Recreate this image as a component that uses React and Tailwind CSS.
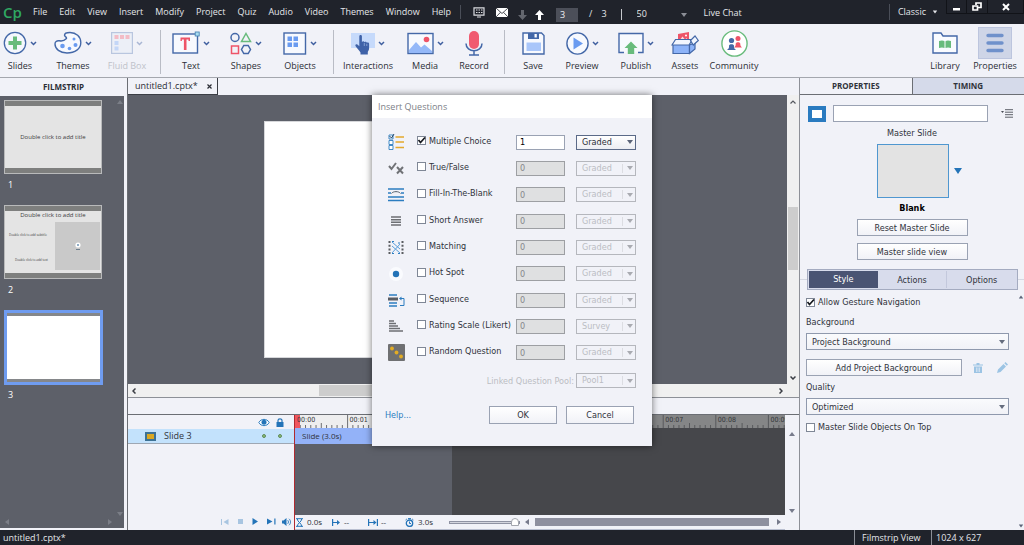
import React from "react";

const MENUS = ["File", "Edit", "View", "Insert", "Modify", "Project", "Quiz", "Audio", "Video", "Themes", "Window", "Help"];

const QUESTIONS = [
  { id: "multiple", label: "Multiple Choice", kind: "Graded", count: "1", on: true },
  { id: "truefalse", label: "True/False", kind: "Graded", count: "0" },
  { id: "blank", label: "Fill-In-The-Blank", kind: "Graded", count: "0" },
  { id: "short", label: "Short Answer", kind: "Graded", count: "0" },
  { id: "matching", label: "Matching", kind: "Graded", count: "0" },
  { id: "hotspot", label: "Hot Spot", kind: "Graded", count: "0" },
  { id: "sequence", label: "Sequence", kind: "Graded", count: "0" },
  { id: "likert", label: "Rating Scale (Likert)", kind: "Survey", count: "0" },
  { id: "random", label: "Random Question", kind: "Graded", count: "0" },
];

/* ---------- small glyphs ---------- */

function Chevron() {
  return (
    <svg width="7" height="5" viewBox="0 0 7 5" fill="none" stroke="#3f5f9f" strokeWidth="1.5" className="shrink-0">
      <path d="M1 1l2.500 2.500L6 1" />
    </svg>
  );
}

function Tri({ dir = "down", className = "" }) {
  const d = { down: "M0 1h6L3 5z", up: "M0 5h6L3 1z", left: "M5 0v6L1 3z", right: "M1 0v6l4-3z" }[dir];
  return (
    <svg width="6" height="6" viewBox="0 0 6 6" className={"shrink-0 " + className}>
      <path d={d} fill="currentColor" />
    </svg>
  );
}

/* ---------- toolbar icons ---------- */

const blue = "#4468a8";

const ICONS = {
  Slides: (
    <svg width="24" height="24" viewBox="0 0 24 24">
      <circle cx="12" cy="12" r="10.7" fill="#f5f7fd" stroke={blue} strokeWidth="1.3" />
      <path d="M10 5.500h4V10h4.500v4H14v4.500h-4V14H5.500v-4H10z" fill="#68bb7c" />
    </svg>
  ),
  Themes: (
    <svg width="28" height="24" viewBox="0 0 28 24">
      <path d="M12.500 7.500C11 9 9 10.500 5.500 9.800 2.500 9.300 1 11 1 13c0 5 5 9 12 9 8 0 13.800-4 13.800-10.500C26.800 5.500 22 1.500 16 1.500c-3 0-5.500 1-5.500 2.700 0 1.300 2.500 1.800 2 3.300z" fill="#f7f9fe" stroke={blue} strokeWidth="1.4" />
      <circle cx="8.500" cy="15" r="2.300" fill="#6a9bf0" />
      <circle cx="15.500" cy="17.500" r="1.800" fill="#6a9bf0" />
      <circle cx="21.500" cy="14" r="2" fill="#6a9bf0" />
      <circle cx="20" cy="8" r="1.500" fill="#6a9bf0" />
    </svg>
  ),
  "Fluid Box": (
    <svg width="22" height="22" viewBox="0 0 22 22">
      <rect x=".6" y=".6" width="20.800" height="20.800" fill="#eceff7" stroke="#b9c6df" strokeWidth="1.200" />
      <path d="M3.500 3h4v4h-4zM9 3h4v4H9zM14.500 3h4v4h-4z" fill="#f3bcc6" />
      <path d="M3.500 9h4v4h-4zM3.500 14.500h4v4h-4z" fill="#c3d6f7" />
    </svg>
  ),
  Text: (
    <svg width="28" height="24" viewBox="0 0 28 24">
      <rect x="1" y="3" width="24.500" height="19" fill="#f7f9fe" stroke={blue} strokeWidth="1.400" />
      <path d="M8.500 6.500h9.500v3.500h-1.500V8.600h-2V19h-2.600V8.600h-2V10H8.500z" fill="#ee5468" />
      <rect x="23.200" y="1" width="4" height="4" fill="#a9dcf0" stroke="#4b86b5" strokeWidth=".9" />
    </svg>
  ),
  Shapes: (
    <svg width="22" height="23" viewBox="0 0 22 23" fill="none" strokeWidth="1.500">
      <circle cx="5" cy="5.500" r="4" stroke={blue} />
      <path d="M16 1.500l4.500 8h-9z" stroke="#68bb7c" />
      <path d="M1.500 14h7v7.500h-7z" stroke="#ee5468" />
      <path d="M13.800 13.500h4.400l2.300 4-2.300 4h-4.400l-2.300-4z" stroke={blue} />
    </svg>
  ),
  Objects: (
    <svg width="24" height="23" viewBox="0 0 24 23">
      <rect x="1" y="1" width="21.500" height="21" fill="#f7f9fe" stroke={blue} strokeWidth="1.400" />
      <path d="M4.500 4.500H9V9H4.500zM10.500 4.500H15V9h-4.500zM4.500 10.500H9V15H4.500zM10.500 10.500H15V15h-4.500z" fill="#6a9bf0" />
    </svg>
  ),
  Interactions: (
    <svg width="24" height="24" viewBox="0 0 24 24">
      <rect x="0" y="2" width="24" height="15" fill="#c6dafb" />
      <path d="M8.300 5.300c0-1.800 2.600-1.800 2.600 0V11c.8-1.200 2.300-.9 2.500.2.900-.8 2.200-.4 2.400.6.900-.6 2.300-.2 2.300 1.200v4.500c0 1.700-1 2.500-1.300 3.500v2.500H9.500V21.500C8.500 19.500 5.500 17 4.500 15c-.6-1.600 1.200-2.300 2.300-1.200l1.500 1.400z" fill="#3f62a8" />
      <path d="M13.300 12v3M15.800 12.800V15" stroke="#c6dafb" strokeWidth=".5" />
    </svg>
  ),
  Media: (
    <svg width="27" height="23" viewBox="0 0 27 23">
      <rect x="1" y="1.500" width="25" height="20" fill="#f7f9fe" stroke={blue} strokeWidth="1.400" />
      <path d="M2 18l7-8 5 5.500 3.500-3 7.500 6.500v2H2z" fill="#94b8f8" />
      <circle cx="19.500" cy="7.500" r="2.800" fill="#ee5468" />
    </svg>
  ),
  Record: (
    <svg width="18" height="25" viewBox="0 0 18 25" fill="none">
      <rect x="4" y="0" width="10" height="18" rx="5" fill="#f05a70" />
      <path d="M1 12.500c0 9.500 16 9.500 16 0M9 19.800V24M4 24h10" stroke={blue} strokeWidth="1.500" />
    </svg>
  ),
  Save: (
    <svg width="23" height="23" viewBox="0 0 23 23">
      <path d="M1 1h18.500L22 3.500V22H1z" fill="#f7f9fe" stroke={blue} strokeWidth="1.400" />
      <path d="M6 1h11v6H6z" fill={blue} />
      <path d="M12.500 2h2.300v3.500h-2.300z" fill="#fff" />
      <path d="M4.500 10.500h14.500V19H4.500z" fill="#a9c6fa" />
    </svg>
  ),
  Preview: (
    <svg width="23" height="23" viewBox="0 0 23 23">
      <circle cx="11.500" cy="11.500" r="10.600" fill="#f7f9fe" stroke={blue} strokeWidth="1.400" />
      <path d="M7.500 5.500v12l9.500-6z" fill="#6a9bf0" />
    </svg>
  ),
  Publish: (
    <svg width="26" height="24" viewBox="0 0 26 24">
      <path d="M6 21.500H1v-19h24v19h-5" fill="#f7f9fe" stroke={blue} strokeWidth="1.400" />
      <path d="M13 10.500l6.500 6.500h-3.300v6H9.800v-6H6.500z" fill="#68bb7c" />
    </svg>
  ),
  Assets: (
    <svg width="28" height="25" viewBox="0 0 28 25">
      <path d="M7 11V3l11-2v10z" fill="#ee5468" />
      <path d="M8 10l3.500-4.500 2.500 3 1.500-1.500 2 3z" fill="#fbdce1" />
      <circle cx="15" cy="4.500" r="1" fill="#fff" />
      <path d="M2 13h16.500v9.500H2z" fill="#8db3f8" stroke={blue} strokeWidth="1.200" />
      <path d="M18.500 22.500L24 18v-6l-5.500 2z" fill="#8db3f8" stroke={blue} strokeWidth="1.200" />
      <path d="M4.500 8.500h17L18 14H1z" fill="#f2f6fe" stroke={blue} strokeWidth="1.200" />
      <path d="M19.500 9.500L24 5l3.300 4.500-5 4.500z" fill="#f2f6fe" stroke={blue} strokeWidth="1.200" />
    </svg>
  ),
  Community: (
    <svg width="27" height="27" viewBox="0 0 27 27">
      <circle cx="13.500" cy="13.500" r="12.600" fill="#fff" stroke="#68bb7c" strokeWidth="1.400" />
      <circle cx="17" cy="8.500" r="2.500" fill="#ee5468" />
      <path d="M13 17.500c1-1 2-2 1.700-3.500-.3-2.300 4.900-2.300 4.600 0-.2 1.500.8 2.500 1.700 3.500z" fill="#ee5468" />
      <circle cx="10.500" cy="10.500" r="2.600" fill={blue} />
      <path d="M6 20c1-1 2.500-2 2-4-.4-2.500 5.400-2.500 5 0-.5 2 1 3 2 4z" fill={blue} />
    </svg>
  ),
  Library: (
    <svg width="26" height="22" viewBox="0 0 26 22">
      <path d="M1 21V1h8l2 3h14v17z" fill="#f9fbff" stroke={blue} strokeWidth="1.400" />
      <path d="M7 9c2-.8 4.500-.8 5.500.2V16c-1.500-.8-3.500-.8-5.500 0zM19 9c-2-.8-4.500-.8-5.500.2V16c1.500-.8 3.500-.8 5.500 0z" fill="#68bb7c" />
    </svg>
  ),
  Properties: (
    <svg width="18" height="20" viewBox="0 0 18 20" stroke="#6f91cb" strokeWidth="3.400" strokeLinecap="round">
      <path d="M2 2.500h14M2 10h14M2 17.500h14" />
    </svg>
  ),
};

function Tool({ name, width, menu, off, boxed }) {
  return (
    <button type="button" disabled={off} className={"flex shrink-0 flex-col items-center whitespace-nowrap " + width}>
      <span
        className={
          "flex h-8 items-center gap-[3px] " + (boxed ? "w-[34px] justify-center border border-[#bcc5de] bg-[#ced5e7]" : "")
        }
      >
        <span className="shrink-0">{ICONS[name]}</span>
        {menu && <span className={off ? "opacity-40" : ""}><Chevron /></span>}
      </span>
      <span className={"text-[9px] leading-[14px] " + (off ? "text-[#bfc2ca]" : "text-[#2b2e36]")}>{name}</span>
    </button>
  );
}

function Rule() {
  return <span className="mt-[3px] h-[44px] w-px shrink-0 bg-[#b9bcc5]" />;
}

/* ---------- question type icons ---------- */

const QICONS = {
  multiple: (
    <svg width="16" height="16" viewBox="0 0 16 16">
      <path d="M1 1h4v4H1zM1 6.500h4v4H1zM1 11.500h4v4H1z" fill="#fff" stroke="#2c7dc0" strokeWidth=".9" />
      <path d="M1.500 2l2 2L6 0" fill="none" stroke="#23405f" />
      <path d="M7.500 3H16M7.500 8H16M7.500 13.500H16" stroke="#e3a92c" strokeWidth="1.400" />
    </svg>
  ),
  truefalse: (
    <svg width="16" height="14" viewBox="0 0 16 14" fill="none" stroke="#707276" strokeWidth="2">
      <path d="M1 5l2.500 3L8 2M9 6l6 6.500M15 6l-6 6.500" />
    </svg>
  ),
  blank: (
    <svg width="16" height="14" viewBox="0 0 16 14" fill="none" stroke="#2c7dc0" strokeWidth="1.500">
      <path d="M0 1h16M0 9h16M0 12.500h16" />
      <path d="M0 5h3M13 5h3" />
      <path d="M3.500 5.500C5 3 11 3 12.500 5.500" stroke="#56606c" strokeWidth="1" />
    </svg>
  ),
  short: (
    <svg width="10" height="10" viewBox="0 0 10 10" stroke="#6d6f73" strokeWidth="1.500">
      <path d="M0 1h10M0 3.700h10M0 6.300h10M0 9h10" />
    </svg>
  ),
  matching: (
    <svg width="16" height="15" viewBox="0 0 16 15" fill="none">
      <path d="M1.500 1v13M14.500 1v13" stroke="#5b5d61" strokeWidth="2" strokeDasharray="2 1.700" />
      <path d="M4 2l8 7M4 13l8-9M4 6l8 7" stroke="#5b9fda" />
      <path d="M4 1.500h2M10 13.500h2M4 13.500h2M10 3h2" stroke="#2c7dc0" />
    </svg>
  ),
  hotspot: (
    <svg width="14" height="14" viewBox="0 0 14 14">
      <circle cx="7" cy="7" r="7" fill="#fafbfe" />
      <circle cx="7" cy="7" r="3.200" fill="#2474b8" />
    </svg>
  ),
  sequence: (
    <svg width="17" height="13" viewBox="0 0 17 13" fill="none">
      <path d="M1 1h8M1 9h8M1 12h8" stroke="#2c7dc0" strokeWidth="1.500" />
      <path d="M0 5h10" stroke="#5a5d63" strokeWidth="3" />
      <path d="M12 4.500h4v7h-4" stroke="#2c7dc0" />
      <path d="M13.500 2.500v4L11 4.500z" fill="#2c7dc0" />
    </svg>
  ),
  likert: (
    <svg width="14" height="12" viewBox="0 0 14 12" stroke="#6d6f73" strokeWidth="1.400">
      <path d="M0 1h5M0 3.500h7M0 6h9M0 8.500h11M0 11h14" />
    </svg>
  ),
  random: (
    <svg width="17" height="17" viewBox="0 0 17 17">
      <rect width="17" height="17" rx="1" fill="#6f7072" />
      <circle cx="4" cy="4.500" r="1.900" fill="#e3ac24" />
      <circle cx="8.500" cy="8.500" r="1.900" fill="#e3ac24" />
      <circle cx="13" cy="12.500" r="1.900" fill="#e3ac24" />
    </svg>
  ),
};

function Check({ id, label, checked }) {
  return (
    <label htmlFor={id} className="flex items-center gap-[3px] whitespace-nowrap">
      <span className="relative flex size-[9px] shrink-0">
        <input
          id={id}
          type="checkbox"
          defaultChecked={checked}
          className="peer size-[9px] appearance-none border border-[#7f8796] bg-white"
        />
        <svg viewBox="0 0 9 9" className="pointer-events-none absolute inset-0 hidden size-[9px] peer-checked:block" fill="none" stroke="#15181e" strokeWidth="1.700">
          <path d="M1.500 4l2 2.500L8 1.500" />
        </svg>
      </span>
      {label}
    </label>
  );
}

function GradeSelect({ id, value, disabled, label }) {
  return (
    <span className="relative flex w-[60px] shrink-0">
      <select
        id={id}
        aria-label={label}
        disabled={disabled}
        defaultValue={value}
        className="h-[15px] w-full appearance-none border border-[#5b6a88] bg-gradient-to-b from-white to-[#ecedf2] pl-[5px] text-[9px] leading-[13px] text-[#2b2e36] disabled:border-[#b5b7bd] disabled:bg-none disabled:text-[#bbbdc3] disabled:opacity-100"
      >
        <option>{value}</option>
      </select>
      <span
        className={
          "pointer-events-none absolute inset-y-[3px] right-[3px] flex items-center pl-[4px] " +
          (disabled ? "border-l border-[#dcdde2] text-[#a9abb1]" : "text-[#5b6478]")
        }
      >
        <Tri />
      </span>
    </span>
  );
}

function WideSelect({ id, value }) {
  return (
    <span className="relative flex">
      <select
        id={id}
        defaultValue={value}
        className="h-[17px] w-full appearance-none border border-[#8f99ad] bg-gradient-to-b from-[#fafbfd] to-[#f1f2f7] pl-[5px] text-[9px] leading-[14px] text-[#30333b]"
      >
        <option>{value}</option>
      </select>
      <Tri className="pointer-events-none absolute right-[4px] top-[6px] text-[#656d7e]" />
    </span>
  );
}

function PushButton({ children, className = "h-[17px]" }) {
  return (
    <button type="button" className={"border border-[#9aa2b3] bg-gradient-to-b from-white to-[#f1f2f7] text-[9px] leading-[14px] whitespace-nowrap text-[#30333b] " + className}>
      {children}
    </button>
  );
}

function InsertQuestions() {
  return (
    <div role="dialog" aria-label="Insert Questions" className="absolute left-1/2 top-[95px] w-[280px] -translate-x-1/2 bg-[#f1f2f8] pb-[22px] font-['DejaVu_Sans_Condensed','DejaVu_Sans',sans-serif] text-[9px] leading-[12px] text-[#30333b] shadow-[0_0_7px_rgba(0,0,0,0.55)]">
      <h2 className="h-[23px] bg-white px-[6px] font-['Open_Sans',sans-serif] leading-[24px] text-[#7d8087]">Insert Questions</h2>
      <div className="mt-[11px] grid h-[237px] auto-rows-fr items-center">
        {QUESTIONS.map((q) => (
          <div key={q.id} className="flex items-center pl-[15px]">
            <span className="flex w-[18px] shrink-0 justify-center">{QICONS[q.id]}</span>
            <span className="w-[99px] shrink-0 pb-[3px] pl-[12px]">
              <Check id={q.id} label={q.label} checked={q.on} />
            </span>
            <input
              type="text"
              aria-label={q.label + " count"}
              defaultValue={q.count}
              disabled={!q.on}
              className="ml-[12px] h-[15px] w-[49px] border border-[#9aa2b3] bg-white px-[3px] text-[9px] text-black disabled:border-[#9d9fa3] disabled:bg-[#dfe0e1] disabled:text-[#85878b]"
            />
            <span className="ml-[11px]">
              <GradeSelect id={q.id + "-kind"} label={q.label + " type"} value={q.kind} disabled={!q.on} />
            </span>
          </div>
        ))}
      </div>
      <div className="mt-[7px] flex items-center justify-end gap-[2px] pr-[16px]">
        <label htmlFor="pool" className="text-[#bbbdc3]">Linked Question Pool:</label>
        <GradeSelect id="pool" value="Pool1" disabled />
      </div>
      <div className="mt-[18px] flex items-center pl-[13px] pr-[18px]">
        <a href="#help" className="mr-auto text-[#2c7dc0]">Help...</a>
        <PushButton className="h-[18px] w-[68px]">OK</PushButton>
        <PushButton className="ml-[9px] h-[18px] w-[68px]">Cancel</PushButton>
      </div>
    </div>
  );
}

/* ---------- top ---------- */

function MenuBar() {
  return (
    <header className="flex h-6 shrink-0 items-center bg-[#20232b] text-[9px] text-[#e4e6ea]">
      <span className="w-[33px] shrink-0 pl-[3px] font-['Open_Sans',sans-serif] text-[15px] font-semibold leading-[22px] text-[#2fa862]">Cp</span>
      <nav className="flex gap-[12px]">
        {MENUS.map((m) => (
          <button type="button" key={m}>{m}</button>
        ))}
      </nav>
      <span className="ml-[9px] h-[14px] w-px bg-[#4a4e58]" />
      <button type="button" aria-label="Layout" className="ml-[12px]">
        <svg width="12" height="11" viewBox="0 0 12 11" fill="none" stroke="#d9dbe0">
          <path d="M1 .8h10v7.400H1z" strokeWidth="1.200" />
          <path d="M3 3h1.500M5.500 3H7M8 3h1.500M3 5.500h1.500M5.500 5.500H7M8 5.500h1.500M4 10h4" />
        </svg>
      </button>
      <button type="button" aria-label="Mail" className="ml-[11px]">
        <svg width="12" height="9" viewBox="0 0 12 9">
          <path d="M0 0h12v9H0z" fill="#fff" />
          <path d="M0 0l6 5.500L12 0M0 9l4.500-4.700M12 9L7.500 4.300" fill="none" stroke="#20232b" strokeWidth=".8" />
        </svg>
      </button>
      <button type="button" aria-label="Next slide" className="ml-[10px] mt-[6px]">
        <svg width="9" height="10" viewBox="0 0 9 10" fill="#63666e"><path d="M3 0h3v5h3L4.500 10 0 5h3z" /></svg>
      </button>
      <button type="button" aria-label="Previous slide" className="ml-[8px] mt-[6px]">
        <svg width="9" height="10" viewBox="0 0 9 10" fill="#fff"><path d="M3 10h3V5h3L4.500 0 0 5h3z" /></svg>
      </button>
      <input aria-label="Slide number" defaultValue="3" className="ml-[12px] mt-[5px] h-[14px] w-[22px] bg-[#4c4f59] px-[4px] text-[9px] text-[#f0f1f4]" />
      <span className="ml-[11px] mt-[4px]">/</span>
      <span className="ml-[9px] mt-[4px]">3</span>
      <span className="ml-[14px] mt-[5px] h-[11px] w-px bg-[#c6c8cd]" />
      <label className="relative ml-[11px] mt-[4px] flex">
        <select aria-label="Zoom" defaultValue="50" className="w-[56px] appearance-none bg-transparent pl-[4px] text-[9px]">
          <option>50</option>
        </select>
        <Tri className="pointer-events-none absolute right-[2px] top-[5px] text-[#8b8e96]" />
      </label>
      <button type="button" className="ml-[15px] mt-px">Live Chat</button>
      <span className="ml-auto h-[16px] w-px bg-[#4a4e58]" />
      <button type="button" className="ml-[8px] flex items-center gap-[6px]">
        Classic
        <Tri className="scale-75" />
      </button>
      <div className="ml-[8px] flex h-[14px] self-start border border-t-0 border-[#111318] text-white">
        <button type="button" aria-label="Minimize" className="flex w-[20px] items-center justify-center border-r border-[#111318]">
          <svg width="9" height="8" viewBox="0 0 9 8"><path d="M1 5h7v2.500H1z" fill="#fff" /></svg>
        </button>
        <button type="button" aria-label="Restore" className="flex w-[21px] items-center justify-center border-r border-[#111318]">
          <svg width="10" height="9" viewBox="0 0 10 9" fill="none" stroke="#fff" strokeWidth="1.700"><path d="M1 4h4.500v4H1zM4 3V1h5v4.500H6" /></svg>
        </button>
        <button type="button" aria-label="Close" className="flex w-[35px] items-center justify-center">
          <svg width="8" height="8" viewBox="0 0 8 8" stroke="#fff" strokeWidth="2"><path d="M1 1l6 6M7 1L1 7" /></svg>
        </button>
      </div>
    </header>
  );
}

function Toolbar() {
  return (
    <div className="flex h-[54px] shrink-0 items-start border-b border-[#a4a7ae] pt-[3px]">
      <Tool name="Slides" width="w-[40px]" menu />
      <Tool name="Themes" width="w-[66px]" menu />
      <Tool name="Fluid Box" width="w-[42px]" menu off />
      <span className="ml-[12px] flex"><Rule /></span>
      <Tool name="Text" width="w-[60px]" menu />
      <Tool name="Shapes" width="w-[50px]" menu />
      <Tool name="Objects" width="w-[58px]" menu />
      <span className="ml-[4px] flex"><Rule /></span>
      <Tool name="Interactions" width="w-[68px]" menu />
      <Tool name="Media" width="w-[46px]" menu />
      <Tool name="Record" width="w-[52px]" />
      <span className="ml-[4px] flex"><Rule /></span>
      <Tool name="Save" width="w-[56px]" />
      <Tool name="Preview" width="w-[42px]" menu />
      <Tool name="Publish" width="w-[66px]" menu />
      <Tool name="Assets" width="w-[32px]" />
      <Tool name="Community" width="w-[66px]" />
      <span className="flex-1" />
      <Tool name="Library" width="w-[42px]" />
      <Tool name="Properties" width="w-[58px]" boxed />
    </div>
  );
}

/* ---------- filmstrip ---------- */

function Filmstrip() {
  return (
    <aside className="flex w-[127px] shrink-0 flex-col">
      <h2 className="h-[18px] text-center text-[8px] font-bold leading-[17px] text-[#2b2e36]">FILMSTRIP</h2>
      <div className="mb-[2px] mr-[3px] flex flex-1 flex-col bg-[#5d6069] pl-[4px] pr-px text-[9px] text-white">
        <div className="flex flex-1">
          <ol className="flex-1 pt-[4px]">
            <li className="h-[105px]">
              <div className="flex h-[74px] w-[98px] items-center justify-center border border-[#b9babb] border-y-[6px] border-y-[#7e7f7e] bg-[#e4e4e4] text-[6px] text-[#3c3c3c] outline outline-1 -outline-offset-1 outline-[#b9babb]">
                Double click to add title
              </div>
              <p className="pl-[4px] pt-[4px] leading-[14px]">1</p>
            </li>
            <li className="h-[105px]">
              <div className="grid h-[74px] w-[98px] grid-cols-[50px_1fr] grid-rows-[11px_1fr] border border-[#b9babb] border-y-[6px] border-y-[#7e7f7e] bg-[#e4e4e4] text-[#3c3c3c] outline outline-1 -outline-offset-1 outline-[#b9babb]">
                <span className="col-span-2 text-center text-[6px] leading-[9px]">Double click to add title</span>
                <span className="flex flex-col justify-around pl-[4px] text-[3px] leading-[6px] whitespace-nowrap">
                  <span>Double click to add subtitle</span>
                  <span className="pl-[6px]">Double click to add text</span>
                </span>
                <span className="mb-[3px] mr-[1px] flex items-center justify-center bg-[#c9c9c9]">
                  <svg width="6" height="9" viewBox="0 0 6 9">
                    <circle cx="3" cy="3" r="2.600" fill="#fff" />
                    <circle cx="3" cy="3" r="1" fill="#6d93b5" />
                    <path d="M1 7.500h4" stroke="#6d7f8f" />
                  </svg>
                </span>
              </div>
              <p className="pl-[4px] pt-[4px] leading-[14px]">2</p>
            </li>
            <li>
              <div className="h-[75px] w-[99px] border-[3px] border-[#6f9cf0]">
                <div className="size-full border-y-[3px] border-[#85878a] bg-white" />
              </div>
              <p className="pl-[4px] pt-[3px] leading-[14px]">3</p>
            </li>
          </ol>
          <div className="flex flex-col justify-between pb-[2px] pt-[3px] text-[#7b7e87]">
            <Tri dir="up" />
            <Tri />
          </div>
        </div>
        <div className="flex justify-between pb-[3px] pr-[10px] text-[#7b7e87]">
          <Tri dir="left" />
          <Tri dir="right" />
        </div>
      </div>
    </aside>
  );
}

/* ---------- stage ---------- */

function Stage() {
  return (
    <div className="grid flex-1 grid-cols-[1fr_12px] grid-rows-[1fr_13px] bg-[#f0f0f0] text-[#3b3e45]">
      <div className="flex items-start justify-center bg-[#5d6069] px-6 pt-[26px]">
        <div className="h-[237px] w-[387px] border border-[#d6d7da] bg-white" />
      </div>
      <div className="flex flex-col items-center pb-[4px] pt-[5px]">
        <svg width="6" height="4" viewBox="0 0 6 4" fill="none" stroke="#55585f" strokeWidth="1.200"><path d="M.5 3.500L3 1l2.500 2.500" /></svg>
        <span className="mt-[103px] h-[63px] w-[10px] bg-[#cdcdcd]" />
        <svg className="mt-auto" width="6" height="4" viewBox="0 0 6 4" fill="none" stroke="#3b3e45" strokeWidth="1.500"><path d="M.5 .5L3 3 5.500 .5" /></svg>
      </div>
      <div className="flex items-center pl-[4px] pr-[4px]">
        <svg width="4" height="6" viewBox="0 0 4 6" fill="none" stroke="#3b3e45" strokeWidth="1.500"><path d="M3.500 .5L1 3l2.500 2.500" /></svg>
        <span className="ml-[183px] h-[11px] w-[276px] bg-[#cdcdcd]" />
        <svg className="ml-auto" width="4" height="6" viewBox="0 0 4 6" fill="none" stroke="#3b3e45" strokeWidth="1.500"><path d="M.5 .5L3 3 .5 5.500" /></svg>
      </div>
      <div />
    </div>
  );
}

/* ---------- timeline ---------- */

const SECOND = 52.6;

function Ruler() {
  const ticks = [];
  for (let i = 0; i <= 94; i++) ticks.push(i);
  return (
    <svg width="100%" height="13" className="block bg-[#858687]">
      <rect width="158" height="13" fill="#eeeeef" />
      {ticks.map((i) => {
        const x = (i * SECOND) / 10;
        const top = i % 10 === 0 ? 0 : i % 5 === 0 ? 8 : 10;
        return <path key={i} d={`M${x} ${top}V13`} stroke="#4c4e52" strokeWidth=".8" />;
      })}
      <rect width="5" height="13" fill="#f0565e" />
      {[0, 1, 2, 3, 4, 5, 6, 7, 8, 9].map((n) => (
        <text key={n} x={n * SECOND + 2} y="7" fontSize="7" fill="#34363a" fontFamily="DejaVu Sans Condensed, DejaVu Sans, sans-serif">
          {"00:0" + n}
        </text>
      ))}
    </svg>
  );
}

function Timeline() {
  return (
    <section aria-label="Timeline" className="flex h-[133px] shrink-0 flex-col border-t border-[#8d9097] text-[8px] text-[#30333b]">
      <div className="h-[17px] shrink-0 border-b border-[#6b6e74]" />
      <div className="flex min-h-0 flex-1">
        <div className="flex w-[166px] shrink-0 flex-col">
          <div className="flex h-[14px] items-center justify-end gap-[6px] pr-[10px]">
            <svg width="12" height="9" viewBox="0 0 12 9">
              <path d="M.8 4.500C3 .3 9 .3 11.200 4.500 9 8.700 3 8.700.8 4.500z" fill="#fff" stroke="#2c7dc0" />
              <circle cx="6" cy="4.300" r="2.500" fill="#2474b8" />
            </svg>
            <svg width="8" height="9" viewBox="0 0 8 9">
              <path d="M2 4V2.500c0-2.200 4-2.200 4 0V4" fill="none" stroke="#2474b8" strokeWidth="1.200" />
              <path d="M.5 4h7v5h-7z" fill="#2474b8" />
            </svg>
          </div>
          <div className="flex h-[15px] items-center border-b border-[#9ea7b3] bg-[#c3e2fc] pl-[17px] pr-[12px] text-[9px]">
            <span className="h-[9px] w-[11px] border-2 border-[#3d7295] bg-[#dba823]" />
            <span className="ml-[8px]">Slide 3</span>
            <span className="ml-auto size-1 rounded-full border border-[#5e8c5a] bg-[#8fbb7a]" />
            <span className="ml-[12px] size-1 rounded-full border border-[#5e8c5a] bg-[#8fbb7a]" />
          </div>
          <div className="mt-auto flex h-[17px] items-center justify-end gap-[9px] pr-[3px] text-[#2474b8]">
            <button type="button" aria-label="Rewind" className="opacity-35">
              <svg width="8" height="6" viewBox="0 0 8 6" fill="currentColor"><path d="M0 0h1v6H0zM7.500 0v6L2.500 3z" /></svg>
            </button>
            <button type="button" aria-label="Stop" className="opacity-35">
              <svg width="5" height="5" viewBox="0 0 5 5" fill="currentColor"><path d="M0 0h5v5H0z" /></svg>
            </button>
            <button type="button" aria-label="Play">
              <svg width="6" height="7" viewBox="0 0 6 7" fill="currentColor"><path d="M.5 0v7L6 3.500z" /></svg>
            </button>
            <button type="button" aria-label="To end">
              <svg width="9" height="7" viewBox="0 0 9 7" fill="currentColor"><path d="M0 .5v6l5.500-3zM7.300 .5h1.200v6H7.300z" /></svg>
            </button>
            <button type="button" aria-label="Audio" className="-ml-[3px]">
              <svg width="9" height="8" viewBox="0 0 9 8" fill="currentColor"><path d="M0 2.500h1.500L4.500 0v8L1.500 5.500H0z" /><path d="M5.700 2.200c1 1 1 2.600 0 3.600M7 .8c2 1.800 2 4.600 0 6.400" fill="none" stroke="currentColor" strokeWidth=".9" /></svg>
            </button>
          </div>
        </div>
        <div className="flex min-w-0 flex-1 flex-col border-l border-[#b02a30]">
          <Ruler />
          <div className="flex flex-1">
            <div className="w-[157px] shrink-0 bg-[#5d6069]">
              <div className="h-[16px] bg-[#93b2f8] pl-[7px] text-[8px] leading-[16px]">Slide (3.0s)</div>
            </div>
            <div className="flex-1 bg-[#46474b]" />
          </div>
          <div className="flex h-[15px] shrink-0 items-center border-b border-[#b9bfd0] bg-[#f1f2f8] pl-px">
            <svg width="7" height="9" viewBox="0 0 7 9" fill="none" stroke="#2474b8"><path d="M0 .7h7M0 8.300h7M1.300 1c0 3 4.400 4 4.400 7.500M5.700 1c0 3-4.400 4-4.400 7.500" /></svg>
            <span className="ml-[4px] w-[25px]">0.0s</span>
            <svg width="8" height="7" viewBox="0 0 8 7" fill="none" stroke="#2474b8"><path d="M.6 0v7M1 3.500h5" strokeWidth="1.200" /><path d="M5 1v5l3-2.500z" fill="#2474b8" stroke="none" /></svg>
            <span className="ml-[4px] w-[24px]">--</span>
            <svg width="10" height="7" viewBox="0 0 10 7" fill="none" stroke="#2474b8"><path d="M.6 0v7M9.400 0v7M1 3.500h5" strokeWidth="1.200" /><path d="M5.500 1v5l3-2.500z" fill="#2474b8" stroke="none" /></svg>
            <span className="ml-[3px] w-[24px]">--</span>
            <svg width="9" height="9" viewBox="0 0 9 9" fill="none" stroke="#2474b8"><circle cx="4.500" cy="5.200" r="3.200" strokeWidth="1.300" /><path d="M4.500 3.500v2h1.500M3 .6h3M.6 2l1.200-1M8.400 2L7.200 1" /></svg>
            <span className="ml-[4px] w-[31px]">3.0s</span>
            <input
              type="range"
              aria-label="Timeline zoom"
              defaultValue="100"
              className="h-[10px] w-[71px] appearance-none bg-transparent [&::-webkit-slider-runnable-track]:h-[3px] [&::-webkit-slider-runnable-track]:border [&::-webkit-slider-runnable-track]:border-[#8f93a3] [&::-webkit-slider-runnable-track]:bg-[#d4d6df] [&::-webkit-slider-thumb]:-mt-[4px] [&::-webkit-slider-thumb]:size-[8px] [&::-webkit-slider-thumb]:appearance-none [&::-webkit-slider-thumb]:rounded-t-full [&::-webkit-slider-thumb]:border [&::-webkit-slider-thumb]:border-[#a3a6ae] [&::-webkit-slider-thumb]:bg-white"
            />
            <Tri dir="left" className="ml-[4px] text-[#777b8c]" />
            <span className="ml-[5px] h-[8px] flex-1 bg-[#8e909f]" />
            <Tri dir="right" className="ml-[7px] mr-[3px] text-[#777b8c]" />
          </div>
        </div>
        <div className="flex w-[14px] shrink-0 flex-col items-center justify-between pb-[16px] pt-[16px] text-[#777b8c]">
          <Tri dir="up" />
          <Tri />
        </div>
      </div>
    </section>
  );
}

/* ---------- properties ---------- */

function PropertiesPanel() {
  return (
    <aside className="flex w-[225px] shrink-0 flex-col border-l border-[#8d9097] text-[9px] leading-[12px] text-[#30333b]">
      <div className="flex h-[17px] shrink-0 border-b border-[#6b6e74] text-[8px] font-bold">
        <button type="button" className="flex-1">PROPERTIES</button>
        <button type="button" className="flex-1 border-l border-[#6b6e74] bg-[#d5daea]">TIMING</button>
      </div>
      <div className="flex flex-1 flex-col font-['DejaVu_Sans_Condensed','DejaVu_Sans',sans-serif]">
        <div className="mt-[10px] flex items-center pl-[8px] pr-[11px]">
          <span className="h-[16px] w-[18px] border-[4px] border-[#2a7bc0] bg-white" />
          <input aria-label="Slide name" className="ml-[7px] h-[17px] min-w-0 flex-1 border border-[#9aa2b3] bg-white px-1" />
          <button type="button" aria-label="Panel menu" className="ml-[13px]">
            <svg width="12" height="9" viewBox="0 0 12 9"><path d="M0 2h3L1.500 4z" fill="#4b4e57" /><path d="M4 .7h8M4 3.200h8M4 5.700h8M4 8.200h8" stroke="#5d6069" /></svg>
          </button>
        </div>
        <div className="flex flex-col items-center">
          <p className="mt-[5px]">Master Slide</p>
          <button type="button" aria-label="Choose master slide" className="ml-[14px] mt-[5px] flex items-center gap-[5px]">
            <span className="h-[54px] w-[72px] border border-[#4f97d0] bg-[#e3e3e3]" />
            <svg width="8" height="6" viewBox="0 0 8 6" fill="#2474b8"><path d="M0 0h8L4 6z" /></svg>
          </button>
          <p className="mt-[4px] font-bold text-black">Blank</p>
          <PushButton className="mt-[5px] h-[17px] w-[111px]">Reset Master Slide</PushButton>
          <PushButton className="mt-[7px] h-[17px] w-[111px]">Master slide view</PushButton>
        </div>
        <div className="mt-[9px] flex items-center">
          <span className="h-px w-[7px] bg-[#d5d8e2]" />
          <div role="tablist" className="flex h-[21px] flex-1 border border-[#a4abc0] bg-[#d8dcec] p-px">
            <button type="button" role="tab" aria-selected="true" className="flex-1 bg-[#4a5473] pb-[2px] text-white">Style</button>
            <button type="button" role="tab" aria-selected="false" className="flex-1">Actions</button>
            <button type="button" role="tab" aria-selected="false" className="flex-1 border-l border-[#c3c8dc]">Options</button>
          </div>
          <span className="h-px w-[6px] bg-[#d5d8e2]" />
        </div>
        <div className="flex flex-1">
          <div className="flex-1 pl-[6px] pt-[6px]">
            <Check id="gesture" label="Allow Gesture Navigation" checked />
            <label htmlFor="background" className="mt-[8px] block">Background</label>
            <div className="mt-[5px]"><WideSelect id="background" value="Project Background" /></div>
            <div className="mt-[9px] flex items-center">
              <PushButton className="h-[17px] w-[156px]">Add Project Background</PushButton>
              <button type="button" aria-label="Delete background" className="ml-[11px]">
                <svg width="10" height="10" viewBox="0 0 10 10" fill="#9cc4e4"><path d="M0 1.500h3.500V0h3v1.500H10v1H0zM1 3.500h8V10H1z" /><path d="M3.500 4.500V9M5 4.500V9M6.500 4.500V9" stroke="#eef2f9" strokeWidth=".6" /></svg>
              </button>
              <button type="button" aria-label="Edit background" className="ml-[14px]">
                <svg width="11" height="11" viewBox="0 0 11 11" fill="#9cc4e4"><path d="M0 11l1-3.500L6.500 2 9 4.500 3.500 10zM7.300 1.300L8.500 0 11 2.500 9.800 3.700z" /></svg>
              </button>
            </div>
            <label htmlFor="quality" className="mt-[5px] block">Quality</label>
            <div className="mt-[5px]"><WideSelect id="quality" value="Optimized" /></div>
            <div className="mt-[6px]"><Check id="ontop" label="Master Slide Objects On Top" /></div>
          </div>
          <div className="flex w-[15px] flex-col items-end justify-between pb-px pt-[4px] text-[#5b6478]">
            <Tri dir="up" className="scale-75" />
            <Tri className="scale-75" />
          </div>
        </div>
      </div>
    </aside>
  );
}

export default function App() {
  return (
    <div className="relative flex min-h-screen flex-col bg-[#f1f2f8] font-['Open_Sans','Noto_Sans',sans-serif] text-[#2b2e36]">
      <MenuBar />
      <Toolbar />
      <main className="flex flex-1">
        <Filmstrip />
        <div className="flex min-w-0 flex-1 flex-col border-l border-[#6b6e74]">
          <div className="flex h-[17px] shrink-0">
            <div className="flex items-center gap-[9px] border-b border-r border-[#3b3e45] pl-[7px] pr-[5px] text-[9px]">
              untitled1.cptx*
              <button type="button" aria-label="Close file">
                <svg width="5" height="5" viewBox="0 0 5 5" stroke="#2b2e36" strokeWidth="1.200"><path d="M.5 .5l4 4M4.500 .5l-4 4" /></svg>
              </button>
            </div>
          </div>
          <Stage />
          <Timeline />
        </div>
        <PropertiesPanel />
      </main>
      <footer className="flex h-[15px] shrink-0 items-center bg-[#20232b] text-[9px] leading-[15px] text-[#e4e6ea]">
        <span className="flex-1 pl-[3px]">untitled1.cptx*</span>
        <span className="w-[77px] border-l border-[#8b8e96] pl-[7px]">Filmstrip View</span>
        <span className="w-[93px] border-l border-[#8b8e96] pl-[4px]">1024 x 627</span>
      </footer>
      <InsertQuestions />
    </div>
  );
}
